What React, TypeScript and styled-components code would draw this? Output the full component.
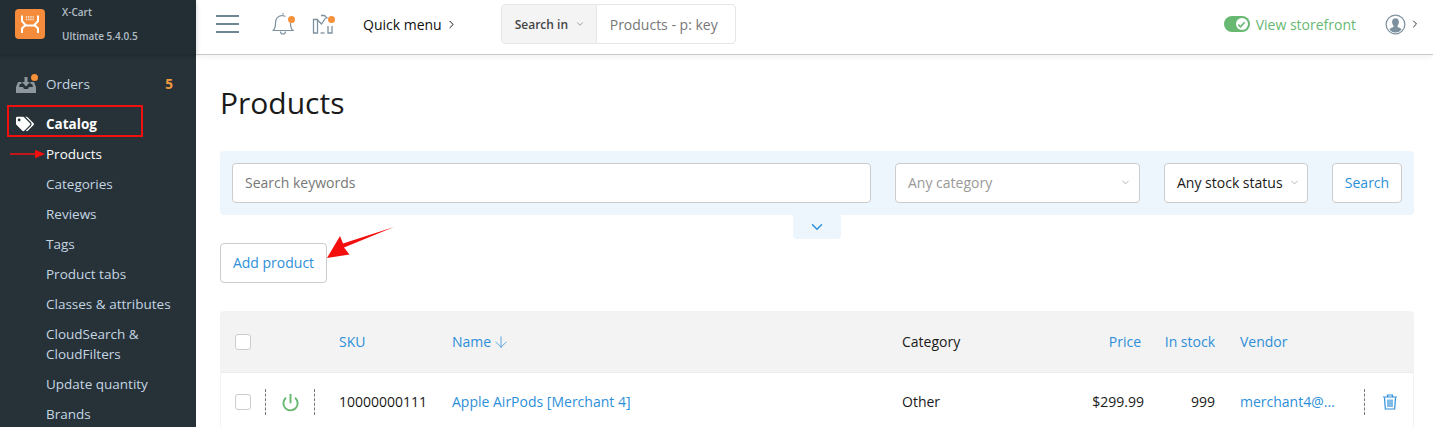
import { ArrowDown, ChevronDown, ChevronRight, Power } from "lucide-react";
import { FaTags } from "react-icons/fa";
import styled, { createGlobalStyle } from "styled-components";

const GlobalStyle = createGlobalStyle`
  html, body {
    margin: 0;
    padding: 0;
    height: 427px;
    overflow: hidden;
    background: #fff;
    font-family: "Open Sans", "Liberation Sans", sans-serif;
    font-size: 14px;
    color: #1a1a1a;
  }
  * {
    box-sizing: border-box;
  }
`;

const catalogLinks = [
  { label: "Products", active: true },
  { label: "Categories" },
  { label: "Reviews" },
  { label: "Tags" },
  { label: "Product tabs" },
  { label: "Classes & attributes" },
  { label: "CloudSearch & CloudFilters" },
  { label: "Update quantity" },
  { label: "Brands" },
];

const App = () => {
  return (
    <Page>
      <GlobalStyle />
      <Sidebar>
        <Brand>
          <LogoBadge>
            <svg width="30" height="30" viewBox="0 0 30 30">
              <g fill="none" stroke="#fff" strokeWidth="2" strokeLinecap="square">
                <path d="M7 7.500v4.500l3.500 4-3.500 3.500v3.500" />
                <path d="M23 7.500v4.500l-3.500 4 3.500 3.500v3.500" />
                <path d="M10.500 16.500h9" />
              </g>
              <g fill="#fff" opacity="0.75">
                <rect x="10.800" y="7.200" width="1.500" height="1.500" />
                <rect x="13.000" y="7.200" width="1.500" height="1.500" />
                <rect x="15.200" y="7.200" width="1.500" height="1.500" />
                <rect x="17.400" y="7.200" width="1.500" height="1.500" />
                <rect x="10.800" y="9.700" width="1.500" height="1.500" />
                <rect x="13.000" y="9.700" width="1.500" height="1.500" />
                <rect x="15.200" y="9.700" width="1.500" height="1.500" />
                <rect x="17.400" y="9.700" width="1.500" height="1.500" />
              </g>
            </svg>
          </LogoBadge>
          <BrandText>
            <span>X-Cart</span>
            <span>Ultimate 5.4.0.5</span>
          </BrandText>
        </Brand>
        <Nav>
          <OrdersRow>
            <NavIcon>
              <svg width="20" height="18" viewBox="0 0 20 18">
                <path fill="#8d979d" d="M2 7h3.500v2H3.800L3 12h4l1 2h4l1-2h4l-.8-3h-1.700V7H18l2 5v6H0v-6z" />
                <path fill="#8d979d" d="M8.500 2h3v5h2.500L10 11.500 6 7h2.500z" />
              </svg>
              <NavDot />
            </NavIcon>
            <span>Orders</span>
            <OrdersCount>5</OrdersCount>
          </OrdersRow>
          <CatalogRow>
            <NavIcon>
              <FaTags size={18} color="#fff" />
            </NavIcon>
            <span>Catalog</span>
            <RedBox />
          </CatalogRow>
          {catalogLinks.map((link) => (
            <SubLink key={link.label} $active={link.active}>
              {link.active && (
                <SmallArrow width="36" height="10" viewBox="0 0 36 10">
                  <path d="M0 4.300h25V0.800L35 5 25 9.200V5.700H0z" fill="#f40f0f" />
                </SmallArrow>
              )}
              {link.label}
            </SubLink>
          ))}
        </Nav>
      </Sidebar>

      <Main>
        <Header>
          <Burger>
            <span />
            <span />
            <span />
          </Burger>
          <HeaderIcon>
            <svg width="22" height="24" viewBox="0 0 22 24" fill="none" stroke="#7d919e" strokeWidth="1.200">
              <path d="M1 18.500c2-1.500 2.500-3.500 2.500-7.500 0-4 2.500-7 6.500-7.500 1 0 2 .2 3 .7M18.500 11c0 4 .5 6 2.500 7.500H1" strokeLinecap="round" />
              <path d="M8.500 19.500a2.500 2.500 0 0 0 5 0" />
              <path d="M11 1v1.500" />
            </svg>
            <HeaderDot />
          </HeaderIcon>
          <HeaderIcon>
            <svg width="22" height="24" viewBox="0 0 22 24" fill="none" stroke="#7d919e" strokeWidth="1.300">
              <path d="M1.500 7.500h4v13.500h-4z" />
              <path d="M5.500 8l4 4 4-6" />
              <path d="M9 3.500h3.500l3 3" />
              <path d="M8.500 21h4" />
              <path d="M16 14v7h4v-7" />
            </svg>
            <HeaderDot />
          </HeaderIcon>
          <QuickMenu>
            Quick menu
            <ChevronRight size={13} strokeWidth={1.800} />
          </QuickMenu>
          <GlobalSearch>
            <SearchIn>
              Search in
              <ChevronDown size={10} color="#8f8f9a" />
            </SearchIn>
            <SearchHint>Products - p: key</SearchHint>
          </GlobalSearch>
          <Storefront>
            <ToggleTrack>
              <ToggleKnob>
                <svg width="9" height="9" viewBox="0 0 10 10" fill="none" stroke="#67b871" strokeWidth="1.800">
                  <path d="M1.500 5.200l2.300 2.300 4.700-5" />
                </svg>
              </ToggleKnob>
            </ToggleTrack>
            View storefront
          </Storefront>
          <Account>
            <svg width="21" height="21" viewBox="0 0 22 22">
              <circle cx="11" cy="11" r="9.800" fill="#fff" stroke="#7d919e" strokeWidth="1.300" />
              <path fill="#7d919e" d="M11 4.500c2.300 0 3.600 1.800 3.600 4 0 1.600-.7 3-1.500 3.800v1.300c1.800.7 3.500 1.400 4.400 2.600A8.600 8.600 0 0 1 11 19.500a8.600 8.600 0 0 1-6.500-3.300c.9-1.200 2.600-1.900 4.400-2.600v-1.300c-.8-.8-1.500-2.200-1.500-3.800 0-2.200 1.300-4 3.600-4z" />
            </svg>
            <ChevronRight size={12} strokeWidth={2} color="#333" />
          </Account>
        </Header>

        <Content>
          <Title>Products</Title>
          <FilterPanel>
            <KeywordInput>Search keywords</KeywordInput>
            <CategorySelect>
              Any category
              <ChevronDown size={11} color="#a8b0b5" />
            </CategorySelect>
            <StockSelect>
              Any stock status
              <ChevronDown size={11} color="#a8b0b5" />
            </StockSelect>
            <SearchButton>Search</SearchButton>
          </FilterPanel>
          <ExpandTab>
            <ChevronDown size={18} strokeWidth={2} color="#2d8fd9" />
          </ExpandTab>
          <AddRow>
            <AddButton>Add product</AddButton>
            <BigArrow width="70" height="36" viewBox="0 0 70 36">
              <path d="M67 0L17 20.500l5.500 7L0 31 13 9l3 7.500z" fill="#f40f0f" />
            </BigArrow>
          </AddRow>
          <Table>
            <HeadRow>
              <CheckCell>
                <Check />
              </CheckCell>
              <LinkCell>SKU</LinkCell>
              <LinkCell>
                Name
                <ArrowDown size={18} strokeWidth={1} />
              </LinkCell>
              <TextCell>Category</TextCell>
              <LinkCell $right $inset>Price</LinkCell>
              <LinkCell $right>In stock</LinkCell>
              <LinkCell $pad>Vendor</LinkCell>
              <div />
            </HeadRow>
            <BodyRow>
              <CheckCell>
                <Check />
                <PowerCell>
                  <Power size={19} strokeWidth={2.400} color="#67b871" />
                </PowerCell>
              </CheckCell>
              <TextCell>10000000111</TextCell>
              <LinkCell>Apple AirPods [Merchant 4]</LinkCell>
              <TextCell>Other</TextCell>
              <TextCell $right>$299.99</TextCell>
              <TextCell $right>999</TextCell>
              <LinkCell $pad>merchant4@...</LinkCell>
              <ActionCell>
                <svg width="16" height="16" viewBox="0 0 16 16" fill="none" stroke="#2d8fd9" strokeWidth="1.200">
                  <path d="M1 3h14M5.500 3V1h5v2" />
                  <path d="M2.500 3.500l.8 11.500h9.400l.8-11.500" />
                  <path d="M6 5.500v7.500M8 5.500v7.500M10 5.500v7.500" />
                </svg>
              </ActionCell>
            </BodyRow>
          </Table>
        </Content>
      </Main>
    </Page>
  );
};

const Page = styled.div`
  display: flex;
  width: 1433px;
  height: 427px;
  overflow: hidden;
`;

const Sidebar = styled.aside`
  flex: 0 0 196px;
  background: #263238;
  color: #c5d5e2;
  font-size: 13.5px;
`;

const Brand = styled.div`
  display: flex;
  height: 54px;
  padding: 9px 0 0 15px;
  gap: 17px;
  background: #232e34;
  box-shadow: 0 2px 5px rgba(0, 0, 0, 0.2);
`;

const LogoBadge = styled.div`
  display: flex;
  align-items: center;
  justify-content: center;
  width: 30px;
  height: 30px;
  border-radius: 4px;
  background: #f48c3c;
`;

const BrandText = styled.div`
  display: flex;
  flex-direction: column;
  gap: 10px;
  margin-top: -4px;
  font-size: 10px;
  font-weight: 600;
  line-height: 14px;
  color: #b3bec6;
`;

const Nav = styled.nav`
  padding-top: 15px;
`;

const OrdersRow = styled.div`
  display: flex;
  align-items: center;
  height: 30px;
  padding: 0 23px 1px 16px;
  gap: 9px;
`;

const NavIcon = styled.span`
  position: relative;
  display: flex;
  align-items: center;
  width: 21px;
  height: 22px;
`;

const NavDot = styled.i`
  position: absolute;
  top: 1px;
  right: -1px;
  width: 7px;
  height: 7px;
  border-radius: 50%;
  background: #f4913a;
`;

const OrdersCount = styled.b`
  margin-left: auto;
  color: #f19a3e;
  font-weight: 700;
`;

const CatalogRow = styled(OrdersRow)`
  position: relative;
  margin-top: 10px;
  color: #fff;
  font-weight: 700;
`;

const RedBox = styled.i`
  position: absolute;
  top: -4px;
  left: 7px;
  width: 136px;
  height: 32px;
  border: 2px solid #f40f0f;
`;

const SubLink = styled.div<{ $active?: boolean }>`
  position: relative;
  padding: 5px 10px 5px 46px;
  line-height: 20px;
  color: ${(p) => (p.$active ? "#fff" : "#c5d5e2")};
`;

const SmallArrow = styled.svg`
  position: absolute;
  top: 10px;
  left: 10px;
`;

const Main = styled.main`
  flex: 1;
  min-width: 0;
`;

const Header = styled.header`
  display: flex;
  align-items: center;
  height: 55px;
  padding-bottom: 6px;
  border-bottom: 1px solid #c8c8c8;
  box-shadow: 0 2px 6px rgba(0, 0, 0, 0.06);
`;

const Burger = styled.div`
  display: flex;
  flex-direction: column;
  gap: 6px;
  width: 23px;
  margin: 0 33px 0 20px;

  span {
    height: 2px;
    background: #6f8694;
  }
`;

const HeaderIcon = styled.span`
  position: relative;
  display: flex;
  width: 22px;
  height: 24px;
  margin-right: 18px;
`;

const HeaderDot = styled.i`
  position: absolute;
  top: 4px;
  right: -1px;
  width: 7px;
  height: 7px;
  border-radius: 50%;
  background: #f4913a;
`;

const QuickMenu = styled.div`
  display: flex;
  align-items: center;
  gap: 3px;
  margin-left: 11px;
  color: #111;
`;

const GlobalSearch = styled.div`
  display: flex;
  height: 40px;
  margin-left: 43px;
  border: 1px solid #e6e6e6;
  border-radius: 4px;
  overflow: hidden;
`;

const SearchIn = styled.div`
  display: flex;
  align-items: center;
  gap: 7px;
  width: 95px;
  padding-left: 13px;
  border-right: 1px solid #e6e6e6;
  background: #f4f4f4;
  font-size: 12px;
  font-weight: 600;
  color: #444;
`;

const SearchHint = styled.div`
  display: flex;
  align-items: center;
  width: 138px;
  padding-left: 13px;
  color: #777;
`;

const Storefront = styled.div`
  display: flex;
  align-items: center;
  gap: 6px;
  margin-left: auto;
  color: #67b871;
`;

const ToggleTrack = styled.span`
  display: flex;
  align-items: center;
  justify-content: flex-end;
  width: 26px;
  height: 16px;
  padding-right: 2px;
  border-radius: 8px;
  background: #67b871;
`;

const ToggleKnob = styled.span`
  display: flex;
  align-items: center;
  justify-content: center;
  width: 12px;
  height: 12px;
  border-radius: 50%;
  background: #fff;
`;

const Account = styled.div`
  display: flex;
  align-items: center;
  gap: 3px;
  margin: 0 12px 0 29px;
`;

const Content = styled.div`
  padding: 0 19px 0 24px;
`;

const Title = styled.h1`
  margin: 0;
  padding-top: 27px;
  height: 96px;
  font-size: 30px;
  font-weight: 400;
  line-height: 42px;
  color: #1a1a1a;
`;

const FilterPanel = styled.div`
  display: flex;
  align-items: center;
  gap: 24px;
  height: 64px;
  padding: 0 12px;
  border-radius: 4px;
  background: #eef6fd;
`;

const Field = styled.div`
  display: flex;
  align-items: center;
  height: 40px;
  padding: 0 12px 2px;
  border: 1px solid #ccc;
  border-radius: 4px;
  background: #fff;
`;

const KeywordInput = styled(Field)`
  flex: 1;
  color: #777;
`;

const CategorySelect = styled(Field)`
  flex: 0 0 245px;
  justify-content: space-between;
  padding-right: 8px;
  color: #999;
`;

const StockSelect = styled(Field)`
  flex: 0 0 144px;
  justify-content: space-between;
  padding-right: 7px;
  color: #1a1a1a;
`;

const SearchButton = styled(Field)`
  flex: 0 0 70px;
  justify-content: center;
  padding: 0 0 2px;
  color: #2d8fd9;
`;

const ExpandTab = styled.div`
  display: flex;
  align-items: center;
  justify-content: center;
  width: 48px;
  height: 24px;
  margin-left: 573px;
  border-radius: 0 0 4px 4px;
  background: #eef6fd;
`;

const AddRow = styled.div`
  position: relative;
  margin: 4px 0 28px;
`;

const AddButton = styled(Field)`
  justify-content: center;
  width: 107px;
  padding: 0 0 2px;
  color: #2d8fd9;
`;

const BigArrow = styled.svg`
  position: absolute;
  top: -16px;
  left: 107px;
`;

const Table = styled.div`
  border-right: 1px solid #f2f2f2;
  border-left: 1px solid #f2f2f2;
  border-radius: 4px;
`;

const TextCell = styled.div<{ $right?: boolean }>`
  text-align: ${(p) => (p.$right ? "right" : "left")};
  color: #1a1a1a;
`;

const LinkCell = styled.div<{ $right?: boolean; $inset?: boolean; $pad?: boolean }>`
  display: flex;
  align-items: center;
  gap: 1px;
  justify-content: ${(p) => (p.$right ? "flex-end" : "flex-start")};
  padding-right: ${(p) => (p.$inset ? "3px" : "0")};
  padding-left: ${(p) => (p.$pad ? "25px" : "0")};
  color: #2d8fd9;
`;

const HeadRow = styled.div`
  display: grid;
  grid-template-columns: 104px 113px 450px 150px 92px 71px 149px 50px;
  align-items: center;
  height: 62px;
  padding-left: 14px;
  border-radius: 4px 4px 0 0;
  border-bottom: 1px solid #ececec;
  background: #f3f3f3;
`;

const BodyRow = styled(HeadRow)`
  height: 58px;
  border-radius: 0;
  border-bottom: none;
  background: #fff;

  ${TextCell}, ${LinkCell} {
    padding-bottom: 2px;
  }
`;

const CheckCell = styled.div`
  display: flex;
  align-items: center;
`;

const Check = styled.span`
  width: 16px;
  height: 16px;
  border: 1px solid #ccc;
  border-radius: 3px;
  background: #fff;
`;

const PowerCell = styled.span`
  display: flex;
  align-items: center;
  justify-content: center;
  width: 50px;
  height: 26px;
  margin-left: 14px;
  border-left: 1px dashed #777;
  border-right: 1px dashed #777;
`;

const ActionCell = styled.div`
  display: flex;
  align-items: center;
  justify-content: center;
  height: 26px;
  border-left: 1px dashed #777;
`;

export default App;
